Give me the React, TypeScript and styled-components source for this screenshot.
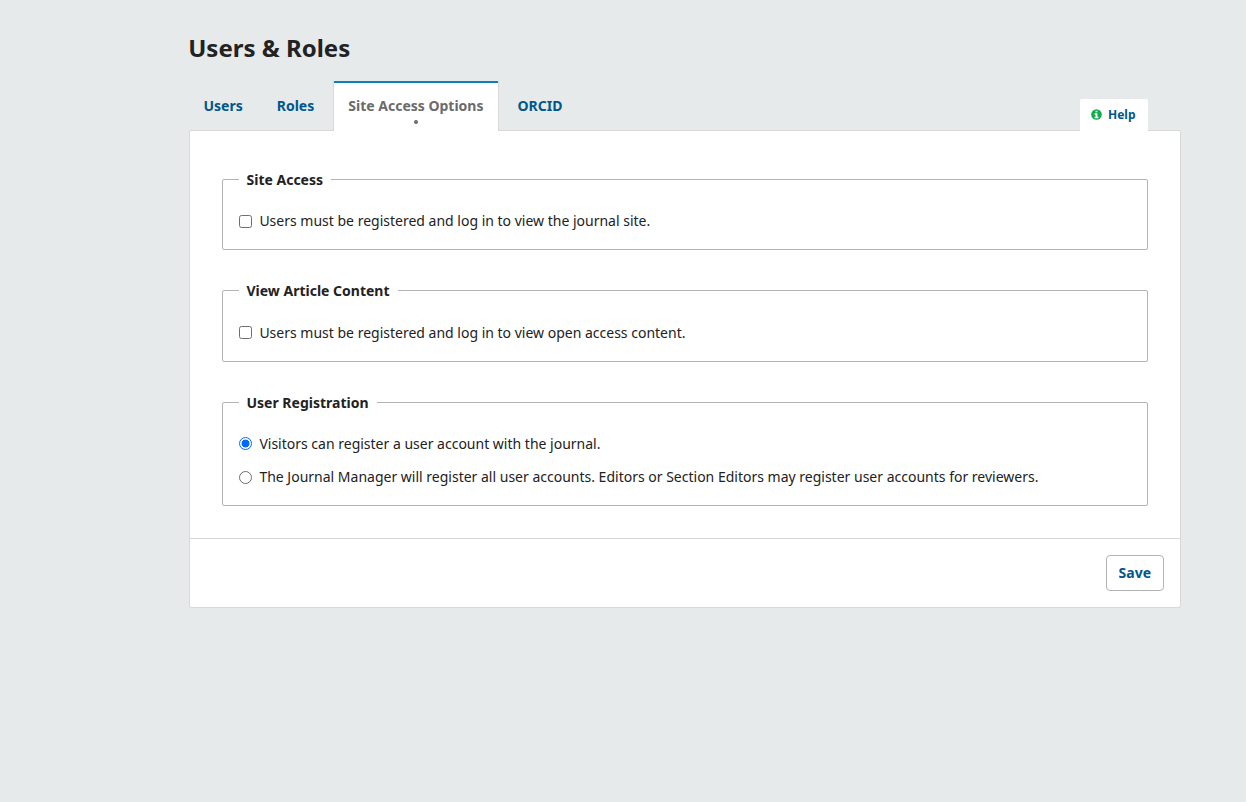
import React from 'react';
import styled, { createGlobalStyle, css } from 'styled-components';

const GlobalStyle = createGlobalStyle`
  *, *::before, *::after { box-sizing: border-box; }
  html { background: #e6eaeb; }
  body {
    margin: 0;
    font-family: 'Noto Sans', 'Liberation Sans', sans-serif;
    font-size: 14px;
    line-height: 20px;
    color: #222;
  }
`;

const Page = styled.main`
  min-height: 802px;
  width: 992px;
  margin-left: 189px;
  padding-top: 32px;
`;

const Title = styled.h1`
  margin: 0 0 0 -0.8px;
  font-size: 24px;
  line-height: 32px;
  font-weight: 700;
  height: 49px;
`;

const TabBar = styled.nav`
  position: relative;
  z-index: 1;
  display: flex;
  align-items: flex-end;
  gap: 4px;
  margin: 0 0 -1px -0.5px;
  padding-right: 33px;
`;

const Tab = styled.button<{ $active?: boolean }>`
  display: flex;
  flex-direction: column;
  align-items: center;
  height: 50px;
  padding: 13px 14px 0;
  border: 1px solid transparent;
  border-top-width: 2px;
  border-bottom: 0;
  border-radius: 2px 2px 0 0;
  background: transparent;
  color: #00578a;
  font: inherit;
  font-weight: 700;
  white-space: nowrap;
  ${({ $active }) =>
    $active &&
    css`
      background: #fff;
      border-color: #0a80ba #d8d8d8 transparent;
      color: #6b6b6b;
      &::after {
        content: '';
        width: 4px;
        height: 4px;
        margin-top: 4px;
        border-radius: 50%;
        background: currentColor;
      }
    `}
`;

const HelpTab = styled.button`
  display: flex;
  align-items: center;
  gap: 6px;
  width: 68px;
  height: 32px;
  margin-left: auto;
  padding: 0 0 0 11px;
  border: 0;
  border-radius: 2px 2px 0 0;
  background: #fff;
  color: #00578a;
  font: inherit;
  font-size: 12px;
  font-weight: 700;
`;

const Panel = styled.section`
  background: #fff;
  border: 1px solid #d8d8d8;
  border-radius: 2px;
`;

const Fields = styled.div`
  display: flex;
  flex-direction: column;
  gap: 30px;
  padding: 38px 32px 32px;
`;

const FieldSet = styled.fieldset<{ $top?: number; $bottom?: number }>`
  margin: 0;
  min-width: 0;
  padding: ${({ $top = 21 }) => $top}px 16px ${({ $bottom = 18 }) => $bottom}px;
  border: 1px solid #b3b3b3;
  border-radius: 2px;
`;

const Legend = styled.legend`
  padding: 0 8.2px 0 7.5px;
  height: 21px;
  line-height: 21px;
  font-weight: 700;
`;

const Option = styled.label`
  display: flex;
  align-items: center;
  gap: 7.4px;
  & + & { margin-top: 13.4px; }
`;

const Control = styled.input`
  appearance: none;
  flex: none;
  width: 13px;
  height: 13px;
  margin: 0;
  border: 1px solid #6f6f6f;
  border-radius: ${({ type }) => (type === 'radio' ? '50%' : '2.5px')};
  background: #fff;
  &:checked {
    border-color: #0068ff;
    background: radial-gradient(circle, #0068ff 3.6px, #fff 4.3px);
  }
`;

const Footer = styled.footer`
  display: flex;
  justify-content: flex-end;
  padding: 16px;
  border-top: 1px solid #d8d8d8;
`;

const SaveButton = styled.button`
  width: 58px;
  height: 36px;
  padding: 0 0.4px 0 0;
  border: 1px solid #b3b3b3;
  border-radius: 4px;
  background: #fff;
  color: #00578a;
  font: inherit;
  font-weight: 700;
`;

const IconGraphic = styled.svg`
  margin-bottom: 1px;
`;

const InfoIcon = () => (
  <IconGraphic width="11" height="11" viewBox="0 0 12 12" aria-hidden="true">
    <circle cx="6" cy="6" r="5.8" fill="#12ac4d" />
    <path d="M5 2h2v1.6H5zM4 4.6h3V8.4h1V10H4V8.4h1V6.2H4z" fill="#fff" />
  </IconGraphic>
);

const tabs = ['Users', 'Roles', 'Site Access Options', 'ORCID'];

export default function App() {
  return (
    <>
      <GlobalStyle />
      <Page>
        <Title>Users &amp; Roles</Title>
        <TabBar>
          {tabs.map((t) => (
            <Tab key={t} $active={t === 'Site Access Options'}>{t}</Tab>
          ))}
          <HelpTab><InfoIcon />Help</HelpTab>
        </TabBar>
        <Panel>
          <Fields>
            <FieldSet>
              <Legend>Site Access</Legend>
              <Option>
                <Control type="checkbox" />
                Users must be registered and log in to view the journal site.
              </Option>
            </FieldSet>
            <FieldSet $top={21.6} $bottom={18.4}>
              <Legend>View Article Content</Legend>
              <Option>
                <Control type="checkbox" />
                Users must be registered and log in to view open access content.
              </Option>
            </FieldSet>
            <FieldSet $top={20.8} $bottom={17.8}>
              <Legend>User Registration</Legend>
              <Option>
                <Control type="radio" name="registration" defaultChecked />
                Visitors can register a user account with the journal.
              </Option>
              <Option>
                <Control type="radio" name="registration" />
                The Journal Manager will register all user accounts. Editors or Section Editors may register user accounts for reviewers.
              </Option>
            </FieldSet>
          </Fields>
          <Footer>
            <SaveButton>Save</SaveButton>
          </Footer>
        </Panel>
      </Page>
    </>
  );
}
